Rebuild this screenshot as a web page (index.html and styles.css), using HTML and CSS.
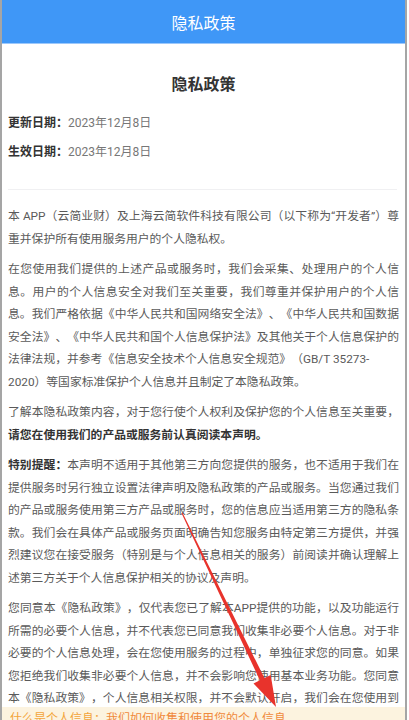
FILE: index.html
```html
<!DOCTYPE html>
<html lang="zh-CN">
<head>
<meta charset="utf-8">
<title>隐私政策</title>
<link rel="stylesheet" href="styles.css">
</head>
<body>
<div class="page">
  <header class="topbar">隐私政策</header>
  <main class="content">
    <h1 class="doc-title">隐私政策</h1>
    <div class="meta">
      <p class="meta-row"><b class="meta-label">更新日期：</b><span class="meta-value">2023年12月8日</span></p>
      <p class="meta-row"><b class="meta-label">生效日期：</b><span class="meta-value">2023年12月8日</span></p>
    </div>
    <hr class="divider">
    <p class="para">本 APP（云简业财）及上海云简软件科技有限公司（以下称为“开发者”）尊重并保护所有使用服务用户的个人隐私权。</p>
    <p class="para">在您使用我们提供的上述产品或服务时，我们会采集、处理用户的个人信息。用户的个人信息安全对我们至关重要，我们尊重并保护用户的个人信息。我们严格依据《中华人民共和国网络安全法》、《中华人民共和国数据<span class="nw">安全法</span>》、《中华人民共和国个人信息保护法》及其他关于个人信息保护的<span class="nw">法律法规</span>，并参考《信息安全技术个人信息安全规范》（GB/T 35273-<br>2020）等国家标准保护个人信息并且制定了本隐私政策。</p>
    <p class="para">了解本隐私政策内容，对于您行使个人权利及保护您的个人信息至关重要，<strong class="em">请您在使用我们的产品或服务前认真阅读本声明。</strong></p>
    <p class="para"><strong class="em">特别提醒：</strong>本声明不适用于其他第三方向您提供的服务，也不适用于我们在提供服务时另行独立设置法律声明及隐私政策的产品或服务。当您通过我们的产品或服务使用第三方产品或服务时，您的信息应当适用第三方的隐私条款。我们会在具体产品或服务页面明确告知您服务由特定第三方提供，并强烈建议您在接受服务（特别是与个人信息相关的服务）前阅读并确认理解上述第三方关于个人信息保护相关的协议及声明。</p>
    <p class="para">您同意本《隐私政策》，仅代表您已了解本APP提供的功能，以及功能运行所需的必要个人信息，并不代表您已同意我们收集非必要个人信息。对于非必要的个人信息处理，会在您使用服务的过程中，单独征求您的同意。如果您拒绝我们收集非必要个人信息，并不会影响您使用基本业务功能。您同意本《隐私政策》，个人信息相关权限，并不会默认开启，我们会在您使用到相应业务功能时，<strong class="em">另行弹窗再次征得您的同意后开启</strong>。权限开启后，您还可以随时通过设备设置关闭权限。</p>
  </main>
  <div class="notice-bar"><span class="notice-text">什么是个人信息：<span class="notice-hl">我们如何收集和使用您的个人信息</span></span></div>
  <svg class="arrow" width="409" height="720" viewBox="0 0 409 720" aria-hidden="true">
    <polygon fill="#e8332c" points="181.5,513.3 259.9,680.3 253.5,683.5 276,707 270.7,675 264.4,678.1 182.5,512.7"/>
  </svg>
</div>
</body>
</html>
```

FILE: styles.css
```css
* { box-sizing: border-box; }
html, body {
  margin: 0;
  padding: 0;
  background: #ffffff;
}
body {
  font-family: Roboto, "Noto Sans CJK SC", sans-serif;
  color: #555;
  width: 409px;
  height: 720px;
  overflow: hidden;
}
.page {
  position: relative;
  width: 407px;
  height: 720px;
  border-left: 2px solid #a5a5a5;
  border-right: 2px solid #a5a5a5;
}
.topbar {
  height: 43px;
  background: #3f97f7;
  color: #ffffff;
  font-size: 16px;
  display: flex;
  align-items: center;
  justify-content: center;
  box-shadow: 0 1px 0 #9cc8fb;
}
.content {
  padding: 0 6px 0 6px;
}
.doc-title {
  margin: 31px 0 0;
  font-size: 16px;
  line-height: 22px;
  font-weight: bold;
  color: #333;
  text-align: center;
}
.meta {
  margin-top: 17px;
  display: flex;
  flex-direction: column;
  gap: 9px;
}
.meta-row {
  margin: 0;
  font-size: 12px;
  line-height: 20px;
}
.meta-label {
  color: #333;
  font-weight: bold;
}
.meta-value {
  color: #777;
}
.divider {
  margin: 27px 2px 0 0;
  border: 0;
  height: 1px;
  background: #f0f0f2;
}
.para {
  margin: 15px 0 0;
  font-size: 11.8px;
  line-height: 22.5px;
  text-align: justify;
  text-spacing-trim: space-all;
  color: #5a5a5a;
}
.para + .para {
  margin-top: 8px;
}
.em {
  color: #333;
  font-weight: bold;
}
.nw { white-space: nowrap; }
.notice-bar {
  position: absolute;
  left: 0;
  right: 0;
  bottom: 0;
  height: 13px;
  background: #fcf3df;
  overflow: hidden;
  padding-left: 8px;
}
.notice-text {
  display: block;
  font-size: 12px;
  line-height: 12px;
  padding-top: 6px;
  color: #f3a43a;
}
.notice-hl {
  color: #f08a3c;
}
.arrow {
  position: absolute;
  left: -2px;
  top: 0;
  pointer-events: none;
}
```
